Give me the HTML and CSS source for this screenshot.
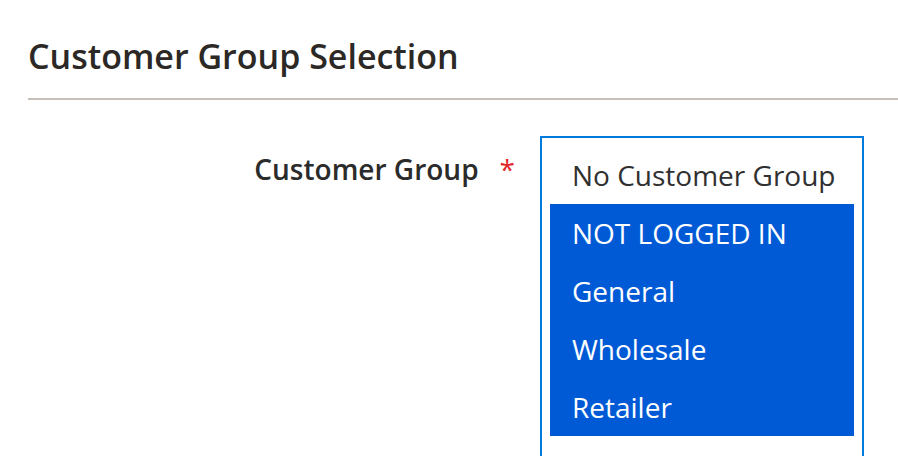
FILE: index.html
```html
<!DOCTYPE html>
<html lang="en">
<head>
  <meta charset="UTF-8">
  <meta name="viewport" content="width=device-width, initial-scale=1.0">
  <title>Customer Group Selection</title>
  <link rel="stylesheet" href="styles.css">
</head>
<body>
  <div class="fieldset">
    <div class="fieldset-title">
      <h2>Customer Group Selection</h2>
    </div>
    <div class="field required">
      <label class="field-label" for="customerGroup">
        <span>Customer Group</span>
      </label>
      <div class="field-control">
        <ul class="multiselect" id="customerGroup">
          <li class="option">No Customer Group</li>
          <li class="option selected">NOT LOGGED IN</li>
          <li class="option selected">General</li>
          <li class="option selected">Wholesale</li>
          <li class="option selected">Retailer</li>
        </ul>
      </div>
    </div>
  </div>
</body>
</html>
```

FILE: styles.css
```css
html {
  overflow: hidden;
}
body {
  margin: 0;
  background: #fff;
  font-family: "Open Sans", "Noto Sans", sans-serif;
  color: #303030;
}
.fieldset {
  padding: 36px 0 0 28px;
}
.fieldset-title {
  border-bottom: 2px solid #c7c0b8;
  padding-bottom: 22px;
  margin-bottom: 36px;
}
.fieldset-title h2 {
  margin: 0;
  font-size: 34px;
  line-height: 40px;
  font-weight: 600;
  color: #2b2825;
}
.field {
  display: grid;
  grid-template-columns: 484px 324px;
  column-gap: 28px;
}
.field-label {
  text-align: right;
  padding-top: 17px;
  margin-right: -3px;
  font-size: 28px;
  line-height: 32px;
  font-weight: 600;
  color: #2b2b2b;
}
.required .field-label span:after {
  content: '*';
  display: inline-block;
  margin-left: 21px;
  color: #e22626;
  font-size: 28px;
  font-weight: 500;
}
.multiselect {
  list-style: none;
  margin: 0;
  height: 340px;
  padding: 8px;
  border: 2px solid #007bdb;
  box-sizing: border-box;
}
.option {
  height: 58px;
  line-height: 58px;
  padding-left: 22px;
  font-size: 28px;
  white-space: nowrap;
}
.option.selected {
  background: #015ad5;
  color: #fff;
}
```
